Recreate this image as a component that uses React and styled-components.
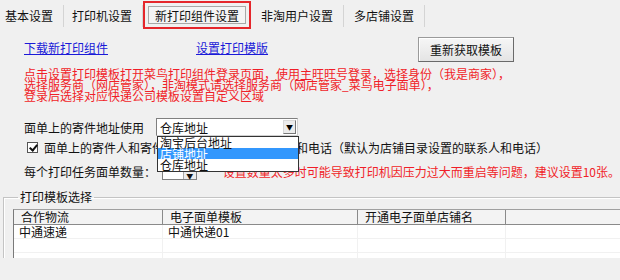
import React from "react";
import styled, { createGlobalStyle } from "styled-components";

const GlobalStyle = createGlobalStyle`
  html, body {
    margin: 0;
    padding: 0;
    background: #f0f0f0;
    overflow: hidden;
  }
  body {
    font-family: "Noto Sans CJK SC", "Noto Sans", sans-serif;
    font-size: 12px;
    color: #111;
  }
`;

const Page = styled.div`
  width: 620px;
  height: 280px;
  overflow: hidden;
`;

const TabBar = styled.div`
  display: flex;
  align-items: center;
  height: 31px;
  padding-left: 5px;
`;

const Tab = styled.div`
  height: 22px;
  line-height: 22px;
  padding: 0 10px 0 ${(p) => p.$pl ?? 10}px;
  border-right: 1px solid #d4d4d4;
  white-space: nowrap;
`;

const ActiveTab = styled.div`
  margin-top: -1px;
  padding: 3px;
  border: 2px solid #e5262b;
  box-sizing: border-box;
  height: 28px;
  display: flex;
  align-items: stretch;
`;

const ActiveInner = styled.div`
  border: 1px solid #a8a8a8;
  background: #f4f4f4;
  padding: 0 6px;
  line-height: 18px;
  white-space: nowrap;
`;

const Panel = styled.div`
  padding-left: 24px;
`;

const LinkRow = styled.div`
  display: flex;
  align-items: flex-start;
  margin-top: 6px;
  height: 25px;
`;

const Link = styled.a`
  color: #1a1ad8;
  text-decoration: underline;
  line-height: 17px;
  margin-top: 2px;
  margin-left: ${(p) => p.$ml || 0}px;
  white-space: nowrap;
`;

const Button = styled.button`
  margin-left: ${(p) => p.$ml || 0}px;
  width: 96px;
  height: 25px;
  font: inherit;
  color: #111;
  background: linear-gradient(#f6f6f6, #e4e4e4);
  border: 1px solid #9a9a9a;
  border-right-color: #6a6a6a;
  border-bottom-color: #6a6a6a;
  box-shadow: inset 1px 1px 0 #fff;
  padding: 0;
`;

const Notice = styled.div`
  margin-top: 6px;
  color: #f01e28;
  line-height: 11px;
  white-space: nowrap;
`;

const FieldRow = styled.div`
  display: flex;
  align-items: center;
  height: 18px;
  margin-top: ${(p) => p.$mt || 0}px;
  position: relative;
  white-space: nowrap;
`;

const Label = styled.span`
  width: ${(p) => p.$w}px;
  flex: none;
`;

const SelectBox = styled.div`
  position: relative;
  width: 142px;
  height: 18px;
  box-sizing: border-box;
  background: #fff;
  border: 1px solid #7f7f7f;
  border-right-color: #d0d0d0;
  border-bottom-color: #d0d0d0;
  display: flex;
  align-items: center;
  padding-left: 3px;
`;

const ArrowBtn = styled.span`
  position: absolute;
  right: 1px;
  top: 1px;
  bottom: 1px;
  width: 13px;
  background: #ececec;
  border: 1px solid #d8d8d8;
  border-right-color: #777;
  border-bottom-color: #777;
  box-sizing: border-box;
  display: flex;
  align-items: center;
  justify-content: center;
  font-size: 7px;
  color: #000;
`;

const DropList = styled.ul`
  position: absolute;
  left: 0;
  top: 17px;
  width: 142px;
  margin: 0;
  padding: 0 0 1px;
  list-style: none;
  background: #fff;
  border: 1px solid #333;
  box-sizing: border-box;
  z-index: 5;
`;

const DropItem = styled.li`
  height: 11px;
  line-height: 11px;
  padding-left: 2px;
  background: ${(p) => (p.$active ? "#3297fd" : "#fff")};
  color: ${(p) => (p.$active ? "#fff" : "#111")};
`;

const CheckRow = styled.div`
  display: flex;
  align-items: center;
  height: 20px;
  margin-top: 1px;
  padding-left: 3px;
  white-space: nowrap;
`;

const Check = styled.span`
  width: 11px;
  height: 11px;
  box-sizing: border-box;
  border: 1px solid #555;
  background: #fff;
  margin-right: 6px;
  position: relative;
  &::after {
    content: "";
    position: absolute;
    left: 3px;
    top: 0px;
    width: 3px;
    height: 6px;
    border: solid #111;
    border-width: 0 2px 2px 0;
    transform: rotate(40deg);
  }
`;

const SpinBox = styled.div`
  width: 52px;
  height: 18px;
  margin-left: 2px;
  box-sizing: border-box;
  background: #fff;
  border: 1px solid #7f7f7f;
  display: flex;
  justify-content: flex-end;
`;

const SpinArrow = styled.span`
  width: 12px;
  background: #ececec;
  border-left: 1px solid #aaa;
  font-size: 7px;
  line-height: 26px;
  text-align: center;
`;

const Warn = styled.span`
  color: #f01e28;
  margin-left: 26px;
`;

const Group = styled.fieldset`
  margin: 10px -20px 0 3px;
  padding: 5px 0 0 9px;
  border: 1px solid #c4c4c4;
  border-bottom: none;
  box-shadow: inset 1px 1px 0 #fff;
  height: 68px;
  box-sizing: border-box;
`;

const Legend = styled.legend`
  margin-left: 5px;
  padding: 0 2px;
  line-height: 14px;
  font-size: 12px;
`;

const Table = styled.div`
  height: 48px;
  overflow: hidden;
  background: #fff;
  border-left: 1px solid #7a7a7a;
  border-top: 1px solid #a0a0a0;
`;

const TRow = styled.div`
  display: grid;
  grid-template-columns: 149px 195px 148px 1fr;
  height: ${(p) => (p.$head ? 14 : 13)}px;
  line-height: ${(p) => (p.$head ? 14 : 13)}px;
  background: ${(p) => (p.$head ? "#f3f3f3" : "#fff")};
  border-bottom: 1px solid ${(p) => (p.$head ? "#8a8a8a" : "#f1f1f1")};
`;

const Cell = styled.div`
  padding-left: ${(p) => (p.$head ? 7 : 5)}px;
  border-right: 1px solid ${(p) => (p.$head ? "#8a8a8a" : "#f1f1f1")};
  white-space: nowrap;
  overflow: hidden;
`;

const columns = ["合作物流", "电子面单模板", "开通电子面单店铺名", ""];
const rows = [
  ["中通速递", "中通快递01", "", ""],
  ["", "", "", ""],
  ["", "", "", ""],
];

export default function App() {
  return (
    <Page>
      <GlobalStyle />
      <TabBar>
        <Tab $pl={0}>基本设置</Tab>
        <Tab $pl={8}>打印机设置</Tab>
        <ActiveTab>
          <ActiveInner>新打印组件设置</ActiveInner>
        </ActiveTab>
        <Tab>非淘用户设置</Tab>
        <Tab>多店铺设置</Tab>
      </TabBar>
      <Panel>
        <LinkRow>
          <Link>下载新打印组件</Link>
          <Link $ml={88}>设置打印模版</Link>
          <Button $ml={150}>重新获取模板</Button>
        </LinkRow>
        <Notice>
          <div>点击设置打印模板打开菜鸟打印组件登录页面，使用主旺旺号登录，选择身份（我是商家），</div>
          <div>选择服务商（网店管家），非淘模式请选择服务商（网店管家_菜鸟电子面单），</div>
          <div>登录后选择对应快递公司模板设置自定义区域</div>
        </Notice>
        <FieldRow $mt={17}>
          <Label $w={132}>面单上的寄件地址使用</Label>
          <SelectBox>
            仓库地址
            <ArrowBtn>▼</ArrowBtn>
            <DropList>
              <DropItem>淘宝后台地址</DropItem>
              <DropItem $active>店铺地址</DropItem>
              <DropItem>仓库地址</DropItem>
            </DropList>
          </SelectBox>
        </FieldRow>
        <CheckRow>
          <Check />
          面单上的寄件人和寄件人电话使用店铺的联系人和电话（默认为店铺目录设置的联系人和电话）
        </CheckRow>
        <FieldRow $mt={5}>
          <Label $w={136}>每个打印任务面单数量：</Label>
          <SpinBox>
            <SpinArrow>▼</SpinArrow>
          </SpinBox>
          <Warn>设置数量太多时可能导致打印机因压力过大而重启等问题，建议设置10张。</Warn>
        </FieldRow>
      </Panel>
      <Group>
        <Legend>打印模板选择</Legend>
        <Table>
          <TRow $head>
            {columns.map((c, i) => (
              <Cell $head key={i}>{c}</Cell>
            ))}
          </TRow>
          {rows.map((r, i) => (
            <TRow key={i}>
              {r.map((c, j) => (
                <Cell key={j}>{c}</Cell>
              ))}
            </TRow>
          ))}
        </Table>
      </Group>
    </Page>
  );
}
